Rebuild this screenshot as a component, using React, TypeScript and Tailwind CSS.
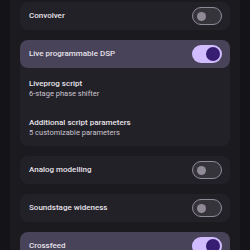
function Toggle({ on }: { on: boolean }) {
  if (on) {
    return (
      <div className="flex h-[18px] w-[30px] shrink-0 items-center justify-end rounded-full bg-[#d0bcff] pr-[2px]">
        <div className="h-[14px] w-[14px] rounded-full bg-[#381e72]" />
      </div>
    )
  }
  return (
    <div className="flex h-[18px] w-[30px] shrink-0 items-center rounded-full border-[1.5px] border-[#8f8a95] bg-[#36343b] pl-[3.5px]">
      <div className="h-[9px] w-[9px] rounded-full bg-[#8f8a95]" />
    </div>
  )
}

function Row({ label, on = false }: { label: string; on?: boolean }) {
  return (
    <div
      className={`flex h-[28px] shrink-0 items-center justify-between rounded-[8px] pl-[9px] pr-[8px] ${
        on ? 'bg-[#49435a]' : 'bg-[#232128]'
      }`}
    >
      <span className="text-[8px] font-medium leading-[10px] text-[#e6e1e9]">{label}</span>
      <Toggle on={on} />
    </div>
  )
}

export default function App() {
  const items = [
    { title: 'Liveprog script', sub: '6-stage phase shifter' },
    { title: 'Additional script parameters', sub: '5 customizable parameters' },
  ]

  return (
    <div
      className="h-[250px] w-[250px] overflow-hidden bg-[#141318] px-[10px]"
      style={{ fontFamily: 'Roboto, "Noto Sans", sans-serif' }}
    >
      <div className="flex h-full flex-col gap-[10px] bg-[#1b1a1f] px-[10px] pt-[2px]">
        <Row label="Convolver" />

        <div className="shrink-0 rounded-[8px] bg-[#232128]">
          <Row label="Live programmable DSP" on />
          <div className="flex flex-col gap-[19px] pb-[8px] pl-[9px] pt-[11px]">
            {items.map((item) => (
              <div key={item.title}>
                <div className="text-[8px] font-medium leading-[10px] text-[#e6e1e9]">
                  {item.title}
                </div>
                <div className="text-[7.5px] leading-[10px] text-[#cac4cf]">{item.sub}</div>
              </div>
            ))}
          </div>
        </div>

        <Row label="Analog modelling" />
        <Row label="Soundstage wideness" />
        <Row label="Crossfeed" on />
      </div>
    </div>
  )
}
